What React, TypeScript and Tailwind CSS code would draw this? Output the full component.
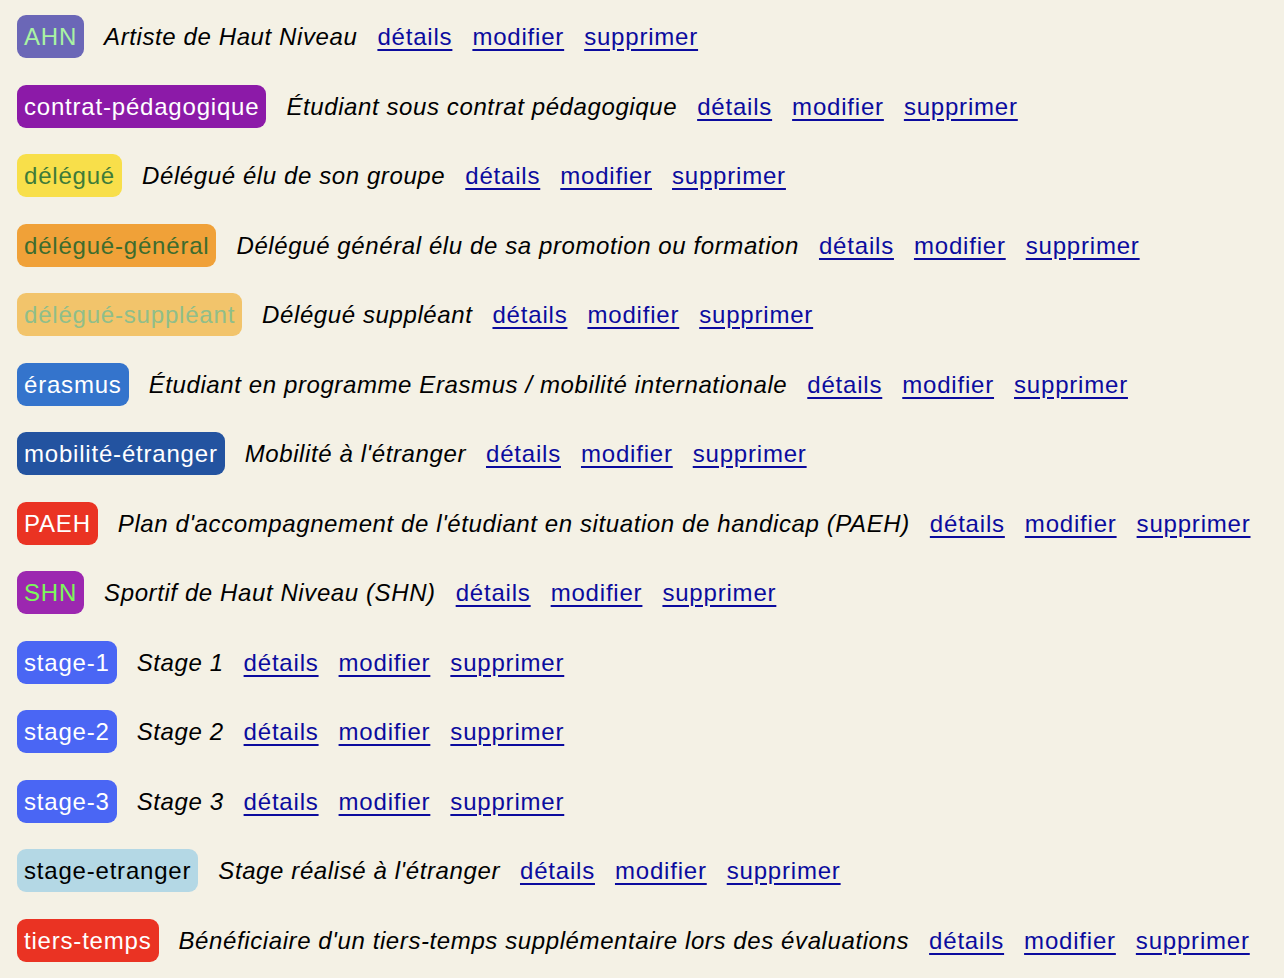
const tags = [
  { code: 'AHN', label: 'Artiste de Haut Niveau', badge: 'bg-[#6b67b7] text-[#a9f3a3]' },
  { code: 'contrat-pédagogique', label: 'Étudiant sous contrat pédagogique', badge: 'bg-[#8c1aa8] text-white' },
  { code: 'délégué', label: 'Délégué élu de son groupe', badge: 'bg-[#f8df4a] text-[#3e7b39]' },
  { code: 'délégué-général', label: 'Délégué général élu de sa promotion ou formation', badge: 'bg-[#f0a138] text-[#3d6c2e]' },
  { code: 'délégué-suppléant', label: 'Délégué suppléant', badge: 'bg-[#f2c46b] text-[#8fbe8a]' },
  { code: 'érasmus', label: 'Étudiant en programme Erasmus / mobilité internationale', badge: 'bg-[#3474cc] text-white' },
  { code: 'mobilité-étranger', label: "Mobilité à l'étranger", badge: 'bg-[#2353a0] text-white' },
  { code: 'PAEH', label: "Plan d'accompagnement de l'étudiant en situation de handicap (PAEH)", badge: 'bg-[#ea3323] text-white' },
  { code: 'SHN', label: 'Sportif de Haut Niveau (SHN)', badge: 'bg-[#9c27b0] text-[#7cf75a]' },
  { code: 'stage-1', label: 'Stage 1', badge: 'bg-[#4a66f4] text-white' },
  { code: 'stage-2', label: 'Stage 2', badge: 'bg-[#4a66f4] text-white' },
  { code: 'stage-3', label: 'Stage 3', badge: 'bg-[#4a66f4] text-white' },
  { code: 'stage-etranger', label: "Stage réalisé à l'étranger", badge: 'bg-[#b4d8e5] text-black' },
  { code: 'tiers-temps', label: "Bénéficiaire d'un tiers-temps supplémentaire lors des évaluations", badge: 'bg-[#ea3323] text-white' },
];

const actions = ['détails', 'modifier', 'supprimer'];

export default function App() {
  return (
    <div
      className="min-h-screen bg-[#f4f1e5] px-[17px] pt-[15px] text-[24px] text-black"
      style={{ fontFamily: '"Liberation Sans", Arial, sans-serif' }}
    >
      <ul className="flex flex-col gap-[26.5px]">
        {tags.map((tag) => (
          <li key={tag.code} className="flex items-center gap-5 whitespace-nowrap tracking-[0.8px]">
            <span className={`rounded-[9px] px-[7px] py-[7px] leading-[29px] ${tag.badge}`}>{tag.code}</span>
            <em className="leading-[29px] tracking-[0.6px]">{tag.label}</em>
            {actions.map((a) => (
              <a key={a} href="#" className="leading-[29px] text-[#0b0b9e] underline underline-offset-[4px]">
                {a}
              </a>
            ))}
          </li>
        ))}
      </ul>
    </div>
  );
}
